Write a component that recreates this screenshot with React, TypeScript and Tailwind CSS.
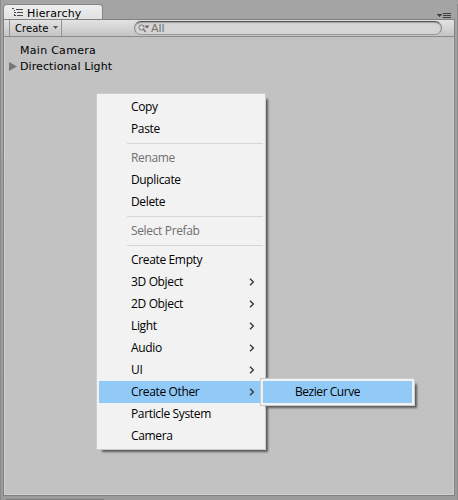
type Item = { label: string; disabled?: boolean; sub?: boolean; active?: boolean } | null;

const items: Item[] = [
  { label: "Copy" },
  { label: "Paste" },
  null,
  { label: "Rename", disabled: true },
  { label: "Duplicate" },
  { label: "Delete" },
  null,
  { label: "Select Prefab", disabled: true },
  null,
  { label: "Create Empty" },
  { label: "3D Object", sub: true },
  { label: "2D Object", sub: true },
  { label: "Light", sub: true },
  { label: "Audio", sub: true },
  { label: "UI", sub: true },
  { label: "Create Other", sub: true, active: true },
  { label: "Particle System" },
  { label: "Camera" },
];

function Row({ item }: { item: Item }) {
  if (!item) {
    return (
      <div className="h-[7px] pt-[3px] pl-7">
        <div className="h-px bg-[#d5d5d5]" />
      </div>
    );
  }
  return (
    <div
      className={`flex h-[22px] items-center justify-between pl-8 pr-2 ${item.active ? "bg-[#91c9f7]" : ""} ${item.disabled ? "text-[#707070]" : "text-black"}`}
    >
      <span>{item.label}</span>
      {item.sub && (
        <svg width="6" height="8" viewBox="0 0 6 8" fill="none" stroke="#333" strokeWidth="1.3">
          <path d="M1 0.7 4.4 4 1 7.3" />
        </svg>
      )}
    </div>
  );
}

function Toolbar() {
  return (
    <div className="flex h-[17px] shrink-0 items-center border-b border-[#8c8c8c] bg-linear-to-b from-[#e3e3e3] to-[#c4c4c4] pl-[5px] pr-3">
      <div className="flex h-full w-[53px] items-center justify-between border-x border-[#939393] pl-[5px] pr-[3px] text-[10px] tracking-[0.05px] text-black">
        <span className="pt-px">Create</span>
        <svg className="mb-0.5" width="5" height="3" viewBox="0 0 5 3">
          <path d="M0 0h5L2.5 3z" fill="#555" />
        </svg>
      </div>
      <div className="ml-[72px] flex h-3.5 flex-1 items-center rounded-full border border-t-[#555] border-r-[#888] border-b-[#999] border-l-[#888] bg-[#d5d5d5] pl-[3px] text-[11px] text-[#707070] shadow-[inset_0_1px_1px_#a0a0a0]">
        <svg width="12" height="9" viewBox="0 0 12 9" fill="none" stroke="#777">
          <circle cx="3.5" cy="3.5" r="2.6" />
          <path d="M5.5 5.5 7.7 8" strokeWidth="1.5" />
          <path d="M6.5 1.5h5L9 4.5z" fill="#666" stroke="none" />
        </svg>
        <span className="ml-px pt-px leading-[13px]">All</span>
      </div>
    </div>
  );
}

export default function App() {
  return (
    <div className="relative flex h-[500px] w-[458px] flex-col overflow-hidden bg-linear-to-b from-[#a4a4a4] to-[#9b9b9b] pl-[3px] pt-1 font-['DejaVu_Sans',sans-serif]">
      <div className="flex h-[15px] justify-between">
        <div className="flex h-4 w-[100px] items-center rounded-t-[4px] border border-b-0 border-[#858585] bg-linear-to-b from-[#eeeeee] to-[#e1e1e1] pl-2 text-[11px] text-black">
          <svg className="mb-px" width="12" height="9" viewBox="0 0 12 9" fill="#4a4a4a" shapeRendering="crispEdges">
            <path d="M0 0h2v1H0zM4 1h7v1H4zM2 2h1v1H2zM2 4h2v1H2zM5 4h6v1H5zM2 6h1v1H2zM2 7h2v1H2zM5 7h6v1H5z" />
          </svg>
          <span className="mt-[3px] ml-[3px] tracking-[0.15px]">Hierarchy</span>
        </div>
        <svg className="mt-[9px] mr-[7px]" width="14" height="5" viewBox="0 0 14 5" fill="#3d3d3d" shapeRendering="crispEdges">
          <path d="M0 1h5v1H4v1H3v1H2V3H1V2H0zM6 0h8v1H6zM6 2h8v1H6zM6 4h8v1H6z" />
        </svg>
      </div>
      <div className="flex h-[477px] w-[452px] flex-col border border-[#808080] bg-[#c2c2c2]">
        <Toolbar />
        <div className="flex-1 border border-t-0 border-[#d0d0d0] pt-1.5 text-[11px] text-black">
          <div className="flex h-4 items-center pl-[15px] tracking-[0.28px]">Main Camera</div>
          <div className="flex h-4 items-center pl-1 tracking-[0.1px]">
            <svg className="mb-px" width="8" height="9" viewBox="0 0 8 9">
              <path d="M0 0 8 4.5 0 9z" fill="#777" />
            </svg>
            <span className="ml-[3px]">Directional Light</span>
          </div>
        </div>
      </div>
      <div className="absolute top-0 left-0 h-[500px] w-px bg-[#8a8a8a]" />
      <div className="absolute top-1 right-0 h-[500px] w-px bg-[#8a8a8a]" />
      <div className="absolute top-[499px] left-1.5 h-px w-[98px] bg-[#7d7d7d]" />

      <div className="absolute top-[93px] left-[96px] w-[170px] border border-[#cccccc] bg-[#f2f2f2] p-0.5 font-['Open_Sans','Noto_Sans',sans-serif] text-[12px] tracking-[-0.35px] shadow-[4px_4px_2px_-2px_#5a5a5a]">
        {items.map((item, i) => (
          <Row key={i} item={item} />
        ))}
      </div>
      <div className="absolute top-[378px] left-[260px] w-[155px] border border-[#cccccc] bg-[#f2f2f2] p-0.5 font-['Open_Sans','Noto_Sans',sans-serif] text-[12px] tracking-[-0.45px] shadow-[4px_4px_2px_-2px_#5a5a5a]">
        <div className="flex h-[22px] items-center bg-[#91c9f7] pl-8 text-black">Bezier Curve</div>
      </div>
    </div>
  );
}
